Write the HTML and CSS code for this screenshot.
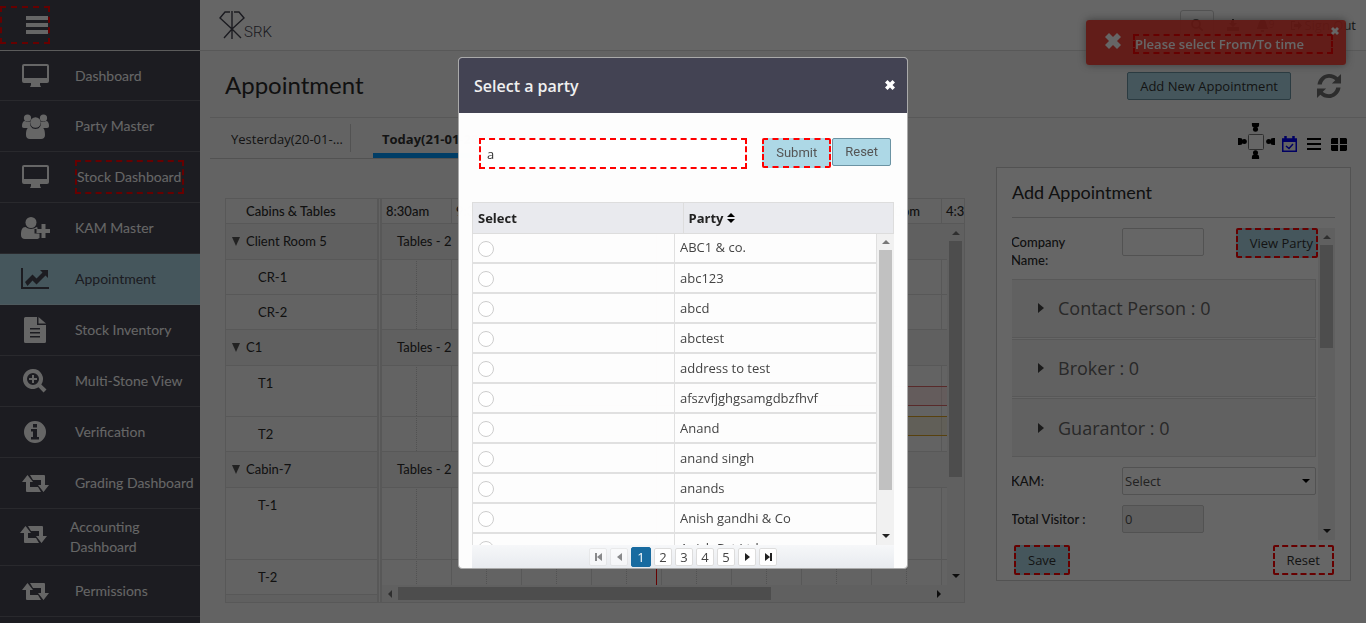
FILE: index.html
```html
<!DOCTYPE html>
<html lang="en">
<head>
<meta charset="utf-8">
<title>Appointment</title>
<link rel="stylesheet" href="styles.css">
</head>
<body>
<svg class="defs" width="0" height="0" aria-hidden="true">
  <symbol id="i-monitor" viewBox="0 0 27 24"><path fill-rule="evenodd" d="M2 0h23a2 2 0 0 1 2 2v15a2 2 0 0 1-2 2h-7v2l1 2H8l1-2v-2H2a2 2 0 0 1-2-2V2a2 2 0 0 1 2-2zm0 2v12h23V2z"/></symbol>
  <symbol id="i-users" viewBox="0 0 27 25"><circle cx="5.500" cy="4" r="3.600"/><circle cx="21.500" cy="4" r="3.600"/><path d="M0 12c0-3 1-5 3-5 2 1 3 1 5 .5C7.500 11 9 13 10 14H2c-1.500 0-2-1-2-2zM27 12c0-3-1-5-3-5-2 1-3 1-5 .5.500 3.500-1 5.500-2 6.500h8c1.500 0 2-1 2-2z"/><circle cx="13.500" cy="8.500" r="5.300"/><path d="M4 21c0-5 1-8 4.500-8 3 2.500 7 2.500 10 0C22 13 23 16 23 21c0 2.500-1.500 4-4 4H8c-2.500 0-4-1.500-4-4z"/></symbol>
  <symbol id="i-user-plus" viewBox="0 0 29 22"><circle cx="10" cy="5.500" r="5.500"/><path d="M0 18c0-5 1-8 4.500-8 3 2.500 8 2.500 11 0l1 .5V12h-3v4.500h5V21l-2 1H4c-2.500 0-4-1.500-4-4z"/><path d="M20.500 7h4v5h4.500v4h-4.500v5h-4v-5H15.500v-4h5z"/></symbol>
  <symbol id="i-chart" viewBox="0 0 28 22"><path d="M0 0h2v19h26v2H0z"/><path d="M4 14l7.500-7.500 4 4 6-6L19 2h8v8l-2.500-2.500-9 9-4-4L6.500 18z"/></symbol>
  <symbol id="i-file" viewBox="0 0 22 26"><path fill-rule="evenodd" d="M1.500 0H13v8h9v16.500a1.500 1.500 0 0 1-1.500 1.500h-19A1.500 1.500 0 0 1 0 24.500v-23A1.500 1.500 0 0 1 1.500 0zM6 11v1.500h10V11zm0 4v1.500h10V15zm0 4v1.500h10V19z"/><path d="M14.500 0L22 6.500h-7.500z"/></symbol>
  <symbol id="i-zoom" viewBox="0 0 24 24"><path fill-rule="evenodd" d="M10 0a10 10 0 0 1 8.300 15.500L23.500 20.500 20.500 23.500 15.500 18.300A10 10 0 1 1 10 0zm0 4a6 6 0 1 0 0 12 6 6 0 0 0 0-12z"/><path d="M9 6h2v3h3v2h-3v3H9v-3H6V9h3z"/></symbol>
  <symbol id="i-info" viewBox="0 0 22 22"><path fill-rule="evenodd" d="M11 0a11 11 0 1 1 0 22 11 11 0 0 1 0-22zM9 3v3.500h4V3zM7 8v2.500h2V16H7v2.500h8V16h-2V8z"/></symbol>
  <symbol id="i-retweet" viewBox="0 0 27 17"><path d="M5.500 0L11 7H8v5h8l3 5H5a1 1 0 0 1-1-1V7H0z"/><path d="M21.500 17L16 10h3V5h-8L8 0h14a1 1 0 0 1 1 1v9h4z"/></symbol>
  <symbol id="i-x" viewBox="0 0 12 12"><path d="M3 0l3 3 3-3 3 3-3 3 3 3-3 3-3-3-3 3-3-3 3-3-3-3z"/></symbol>
  <symbol id="i-refresh" viewBox="0 0 26 26"><path d="M1 11C2 4 8 0 13 0c4 0 7 1.500 9 3.500L25.500 0v10H16l3.500-3.500C18 5 15.500 4 13 4c-4 0-6.500 3-7.500 7z"/><path d="M25 14c-1 7-7 11-12 11-4 0-7-1.500-9-3.500L.5 25V15H10l-3.500 3.500C8 20 10.500 21 13 21c4 0 6.500-3 7.500-7z"/></symbol>
  <symbol id="i-person" viewBox="0 0 10 10"><circle cx="5" cy="3" r="2.800"/><path d="M1 10V8c0-2 1-3 2.500-3h3C8 5 9 6 9 8v2z"/></symbol>
</svg>

<div class="app">
  <nav class="sidebar" aria-label="Main">
    <div class="sidebar-head"><button class="menu-btn mark" aria-label="Menu"><svg width="22" height="18" viewBox="0 0 22 18"><path d="M0 0h22v4H0zM0 7h22v4H0zM0 14h22v4H0z"/></svg></button></div>
    <a href="#" class="nav-item"><svg width="27" height="24"><use href="#i-monitor"/></svg><span>Dashboard</span></a>
    <a href="#" class="nav-item"><svg width="27" height="25"><use href="#i-users"/></svg><span>Party Master</span></a>
    <a href="#" class="nav-item"><svg width="27" height="24"><use href="#i-monitor"/></svg><span class="nav-mark mark">Stock Dashboard</span></a>
    <a href="#" class="nav-item"><svg width="29" height="22"><use href="#i-user-plus"/></svg><span>KAM Master</span></a>
    <a href="#" class="nav-item active"><svg width="28" height="22"><use href="#i-chart"/></svg><span>Appointment</span></a>
    <a href="#" class="nav-item"><svg width="22" height="26"><use href="#i-file"/></svg><span>Stock Inventory</span></a>
    <a href="#" class="nav-item"><svg width="24" height="24"><use href="#i-zoom"/></svg><span>Multi-Stone View</span></a>
    <a href="#" class="nav-item"><svg width="22" height="22"><use href="#i-info"/></svg><span>Verification</span></a>
    <a href="#" class="nav-item"><svg width="27" height="17"><use href="#i-retweet"/></svg><span>Grading Dashboard</span></a>
    <a href="#" class="nav-item tall"><svg width="27" height="17"><use href="#i-retweet"/></svg><span>Accounting Dashboard</span></a>
    <a href="#" class="nav-item"><svg width="27" height="17"><use href="#i-retweet"/></svg><span>Permissions</span></a>
  </nav>

  <div class="main">
    <header class="topbar">
      <div class="logo">
        <svg width="26" height="28" viewBox="0 0 26 28" fill="none" stroke="#454552" stroke-width="1.400"><path d="M11 1H6L1 7l12 11 12-11-5-6h-5M13 0v28M13 18L5 27M13 18l9 9"/></svg>
        <span>SRK</span>
      </div>
      <div class="top-actions">
        <button class="search-btn" aria-label="Search"><svg width="12" height="12" viewBox="0 0 12 12" fill="none" stroke="#222" stroke-width="2"><circle cx="5" cy="5" r="4"/><path d="M8 8l4 4"/></svg></button>
        <svg width="12" height="12" viewBox="0 0 12 12"><path d="M4 2h1V0h2v4h3L6 8 2 4h2zM0 8h12v4H0z"/></svg>
        <span class="bell"><svg width="13" height="13" viewBox="0 0 13 13"><path d="M5 1h3c3 1 2 6 4 8v1H1V9c2-2 1-7 4-8zM5 11h3v2H5z"/></svg><sup>9</sup></span>
        <a href="#" class="signout"><svg width="11" height="11" viewBox="0 0 11 11"><path d="M0 1h4v1H1v7h3v1H0zM3 4h4V1l4 4.500L7 10V7H3z"/></svg>Sign Out</a>
      </div>
    </header>

    <div class="titlebar">
      <h1>Appointment</h1>
      <div class="title-actions">
        <button class="btn add-btn">Add New Appointment</button>
        <button class="icon-btn" aria-label="Refresh"><svg width="26" height="25" fill="#6e6e6e"><use href="#i-refresh"/></svg></button>
      </div>
    </div>

    <div class="columns">
      <section class="left">
        <div class="tabs">
          <button class="tab"><span>Yesterday(20-01-2020)</span></button>
          <button class="tab current"><span>Today(21-01-2020)</span></button>
        </div>
        <div class="scheduler">
          <div class="resources">
            <div class="cell head">Cabins &amp; Tables</div>
            <div class="cell group">Client Room 5</div>
            <div class="cell room">CR-1</div>
            <div class="cell room">CR-2</div>
            <div class="cell group">C1</div>
            <div class="cell room mid">T1</div>
            <div class="cell room">T2</div>
            <div class="cell group">Cabin-7</div>
            <div class="cell room high">T-1</div>
            <div class="cell room">T-2</div>
            <div class="filler"></div>
          </div>
          <div class="timeline">
            <div class="times"><span>8:30am</span><span>9:30am</span><span>10:30am</span><span>11:30am</span><span>12:30pm</span><span>1:30pm</span><span>2:30pm</span><span>3:30pm</span><span>4:30pm</span></div>
            <div class="time-area">
              <div class="lanes">
                <div class="cell stats"><span>Tables - 2</span></div>
                <div class="cell lane"></div>
                <div class="cell lane"></div>
                <div class="cell stats"><span>Tables - 2</span></div>
                <div class="cell lane mid"><div class="event red"></div></div>
                <div class="cell lane"><div class="event amber"></div></div>
                <div class="cell stats"><span>Tables - 2</span></div>
                <div class="cell lane high"></div>
                <div class="cell lane"></div>
                <div class="now"></div>
              </div>
              <div class="vscroll"><i class="arrow up"></i><div class="thumb"></div><i class="arrow down"></i></div>
            </div>
            <div class="hscroll"><i class="arrow prev"></i><div class="track"><div class="thumb"></div></div><i class="arrow next"></i></div>
          </div>
        </div>
      </section>

      <section class="right">
        <div class="views">
          <svg class="seats" width="37" height="37" viewBox="0 0 37 37"><rect x="10.500" y="11.500" width="15" height="15" rx="1" fill="#fff" stroke="#777"/><use href="#i-person" x="13" y="27" width="9" height="9"/><use href="#i-person" width="9" height="9" transform="translate(22 9) rotate(180)"/><use href="#i-person" width="9" height="9" transform="translate(9 14) rotate(90)"/><use href="#i-person" width="9" height="9" transform="translate(28 23) rotate(-90)"/></svg>
          <svg class="cal" width="15" height="16" viewBox="0 0 15 16" fill="none" stroke="#0000f5"><rect x=".75" y="3" width="13.500" height="12.250" stroke-width="1.500"/><path d="M0 4.500h15" stroke-width="3"/><path d="M3.500 0v4M11.500 0v4" stroke-width="2.500"/><path d="M4 10l3 2.500L11 8" stroke-width="1.500"/></svg>
          <svg width="14" height="12" viewBox="0 0 14 12"><path d="M0 0h14v2H0zM0 5h14v2H0zM0 10h14v2H0z"/></svg>
          <svg width="16" height="13" viewBox="0 0 16 13"><path d="M1 0h6v6H0V1zM9 0h6l1 1v5H9zM0 7h7v6H1l-1-1zM9 7h7v5l-1 1H9z"/></svg>
        </div>
        <div class="panel">
          <h2>Add Appointment</h2>
          <div class="panel-scroll">
            <div class="form">
              <div class="row company"><label for="company">Company Name:</label><input id="company" class="short" type="text"><button class="btn mark view-btn">View Party</button></div>
              <div class="accordion">
                <button class="acc"><i class="arrow next"></i>Contact Person : 0</button>
                <button class="acc"><i class="arrow next"></i>Broker : 0</button>
                <button class="acc"><i class="arrow next"></i>Guarantor : 0</button>
              </div>
              <div class="row"><label for="kam">KAM:</label><div class="select"><select id="kam"><option>Select</option></select><i class="arrow down"></i></div></div>
              <div class="row"><label for="visitors">Total Visitor :</label><input id="visitors" class="short" type="text" value="0" disabled></div>
            </div>
            <div class="vscroll"><i class="arrow up"></i><div class="thumb"></div><i class="arrow down"></i></div>
          </div>
          <div class="panel-foot"><button class="btn mark">Save</button><button class="btn mark plain">Reset</button></div>
        </div>
      </section>
    </div>
  </div>
</div>

<div class="toast" role="alert"><svg width="16" height="16"><use href="#i-x"/></svg><span class="toast-text mark">Please select From/To time</span><button class="toast-close" aria-label="Dismiss"><svg width="8" height="8"><use href="#i-x"/></svg></button></div>

<div class="backdrop">
  <div class="dialog" role="dialog" aria-labelledby="dlg-title">
    <div class="dialog-head"><h2 id="dlg-title">Select a party</h2><button aria-label="Close"><svg width="10" height="10"><use href="#i-x"/></svg></button></div>
    <div class="dialog-body">
      <div class="filter"><input class="mark" type="text" value="a" aria-label="Party name"><button class="btn mark">Submit</button><button class="btn">Reset</button></div>
      <table class="thead"><thead><tr><th>Select</th><th>Party <svg width="8" height="10" viewBox="0 0 8 10"><path d="M4 0l4 4H0zM4 10l4-4H0z"/></svg></th></tr></thead></table>
      <div class="tbody">
        <table>
          <tr><td><input type="radio" name="party" id="p1"></td><td><label for="p1">ABC1 &amp; co.</label></td></tr>
          <tr><td><input type="radio" name="party" id="p2"></td><td><label for="p2">abc123</label></td></tr>
          <tr><td><input type="radio" name="party" id="p3"></td><td><label for="p3">abcd</label></td></tr>
          <tr><td><input type="radio" name="party" id="p4"></td><td><label for="p4">abctest</label></td></tr>
          <tr><td><input type="radio" name="party" id="p5"></td><td><label for="p5">address to test</label></td></tr>
          <tr><td><input type="radio" name="party" id="p6"></td><td><label for="p6">afszvfjghgsamgdbzfhvf</label></td></tr>
          <tr><td><input type="radio" name="party" id="p7"></td><td><label for="p7">Anand</label></td></tr>
          <tr><td><input type="radio" name="party" id="p8"></td><td><label for="p8">anand singh</label></td></tr>
          <tr><td><input type="radio" name="party" id="p9"></td><td><label for="p9">anands</label></td></tr>
          <tr><td><input type="radio" name="party" id="p10"></td><td><label for="p10">Anish gandhi &amp; Co</label></td></tr>
          <tr><td><input type="radio" name="party" id="p11"></td><td><label for="p11">Anish Pvt Ltd</label></td></tr>
        </table>
        <div class="vscroll"><i class="arrow up"></i><div class="thumb"></div><i class="arrow down"></i></div>
      </div>
      <div class="pager">
        <button class="pg off" aria-label="First"><svg width="7" height="8" viewBox="0 0 7 8"><path d="M0 0h2v8H0zM7 0v8L2 4z"/></svg></button>
        <button class="pg off" aria-label="Previous"><svg width="5" height="8" viewBox="0 0 5 8"><path d="M5 0v8L0 4z"/></svg></button>
        <button class="pg on">1</button><button class="pg">2</button><button class="pg">3</button><button class="pg">4</button><button class="pg">5</button>
        <button class="pg" aria-label="Next"><svg width="5" height="8" viewBox="0 0 5 8"><path d="M0 0v8l5-4z"/></svg></button>
        <button class="pg" aria-label="Last"><svg width="7" height="8" viewBox="0 0 7 8"><path d="M5 0h2v8H5zM0 0v8l5-4z"/></svg></button>
      </div>
    </div>
  </div>
</div>
</body>
</html>
```
FILE: styles.css
```css
* { box-sizing: border-box; }
body { margin: 0; height: 100vh; overflow: hidden; font: 13px/20px Lato, sans-serif; color: #2b2b2b; background: #f8f8f8; }
h1, h2 { margin: 0; font-weight: 400; }
button, input, select { font: 13px/18px "Open Sans", sans-serif; color: #333; margin: 0; border-radius: 0; }
button { background: none; border: 0; padding: 0; }
svg { display: block; flex: none; }
.defs { position: absolute; }
.app { display: flex; height: 100%; }

.mark, .btn.mark { border: 2px dashed #f00; }
.btn { height: 28px; padding: 0 12px; background: #add8e6; border: 1px solid #6b93a3; border-radius: 2px; white-space: nowrap; }
.btn.mark { height: 30px; }
.btn.plain { background: #fff; }

/* Sidebar */
.sidebar { flex: none; width: 200px; background: #464653; overflow: hidden; }
.sidebar-head { height: 51px; padding-top: 6px; border-bottom: 1px solid #e4e4e4; }
.menu-btn { width: 50px; height: 38px; display: flex; align-items: center; justify-content: flex-end; }
.menu-btn svg { fill: #fff; }
.nav-item { height: 51px; padding-left: 19px; display: grid; grid-template-columns: 32px 1fr; column-gap: 24px; align-items: center; border-bottom: 1px solid #666671; color: #fff; fill: #fff; font-size: 14px; text-decoration: none; }
.nav-item svg { margin: 0 auto; }
.nav-item span { white-space: nowrap; }
.nav-item:nth-child(2) { height: 50px; }
.nav-item.active { background: #add8e6; color: #464653; fill: #464653; border-color: #c0dfe8; }
.nav-item.tall { height: 57px; padding-left: 17px; column-gap: 21px; }
.nav-item.tall svg { margin-bottom: 5px; }
.nav-item.tall span { width: 100px; white-space: normal; }
.nav-item .nav-mark { width: 109px; height: 34px; line-height: 30px; }

/* Header */
.main { flex: 1; min-width: 0; display: flex; flex-direction: column; }
.topbar { height: 51px; padding: 0 10px 0 19px; background: #fff; border-bottom: 1px solid #ddd; display: flex; justify-content: space-between; align-items: center; }
.logo { display: flex; align-items: flex-end; }
.logo span { margin-left: -1px; font: 15px/14px Roboto, sans-serif; font-weight: 300; color: #454552; }
.top-actions { display: flex; align-items: center; gap: 17px; font: 13px/20px "Open Sans", sans-serif; }
.search-btn { width: 34px; height: 30px; margin-right: -4px; border: 1px solid #ccc; border-radius: 3px; display: flex; align-items: center; justify-content: center; }
.bell { display: flex; }
.bell sup { font-size: 10px; line-height: 10px; }
.signout { display: flex; align-items: center; gap: 2px; color: #333; text-decoration: none; }
.titlebar { height: 67px; margin-left: 10px; padding: 4px 24px 0 15px; border-bottom: 1px solid #ddd; display: flex; justify-content: space-between; align-items: center; }
h1 { font-size: 24px; line-height: 32px; padding-bottom: 2px; }
.title-actions { display: flex; align-items: center; gap: 25px; }
.columns { flex: 1; margin: 0 15px 0 10px; display: flex; gap: 31px; }

/* Tabs */
.left { flex: 1; min-width: 0; display: flex; flex-direction: column; }
.tabs { width: 90%; height: 41px; border-bottom: 1px solid #ccc; display: flex; gap: 22px; align-items: center; }
.tab { width: 141px; height: 28px; padding: 1px 6px 0 21px; border-right: 1px solid #ccc; text-align: left; }
.tab span { display: block; overflow: hidden; text-overflow: ellipsis; white-space: nowrap; }
.tab.current { height: 40px; padding: 6px 9px 0; border-right: 0; border-bottom: 5px solid #0098ff; font-weight: 700; }
.tab.current span { overflow: visible; }

/* Scheduler */
.scheduler { margin: 39px 0 0 15px; display: flex; border: 1px solid #ddd; }
.cell { height: 35px; border-bottom: 1px solid #ddd; position: relative; }
.resources { flex: none; width: 156px; border-right: 5px double #ddd; }
.cell.head { height: 25px; padding-left: 20px; line-height: 25px; font-weight: 500; }
.cell.group { height: 36px; padding-left: 20px; line-height: 34px; background: #efefef; }
.cell.group::before { content: ""; position: absolute; left: 6px; top: 13px; border: solid transparent; border-width: 9px 4px 0; border-top-color: #555; }
.cell.room { padding-left: 32px; line-height: 34px; }
.cell.mid { height: 51px; }
.cell.high { height: 72px; }
.filler { height: 7px; background: #f0f0f0; }
.timeline { flex: 1; min-width: 0; display: flex; flex-direction: column; }
.times { height: 25px; border-bottom: 1px solid #ddd; display: flex; overflow: hidden; line-height: 25px; font-weight: 500; }
.times span { flex: none; width: 70px; padding-left: 4px; border-right: 1px solid #ddd; }
.time-area { flex: 1; display: flex; }
.lanes { flex: 1; min-width: 0; height: 361px; overflow: hidden; position: relative; }
.cell.stats { height: 36px; padding-left: 15px; line-height: 34px; background: #efefef; }
.lane { background: linear-gradient(to right, transparent 69px, #ddd 69px) 0 0 / 70px 100%, repeating-linear-gradient(to bottom, #f8f8f8 0 1px, transparent 1px 2px), linear-gradient(to right, transparent 34px, #ccc 34px 35px, transparent 35px) 0 0 / 70px 100%; }
.event { position: absolute; left: 150px; right: 0; height: 20px; }
.event.red { top: 20px; border: solid #dd6a6a; border-width: 1px 0; background: rgba(255, 190, 185, .3); }
.event.amber { top: -1px; border: solid #dca224; border-width: 1px 0; background: rgba(225, 205, 130, .25); }
.now { position: absolute; left: 274px; top: 0; width: 1px; height: 100%; background: #f00; }

/* Scrollbars and arrows */
.arrow { display: block; width: 0; height: 0; border: 4px solid transparent; }
.arrow.up { border-top-width: 0; border-bottom-color: #777; }
.arrow.down { border-bottom-width: 0; border-top-color: #222; }
.arrow.prev { border-left-width: 0; border-right-color: #777; }
.arrow.next { border-right-width: 0; border-left-color: #222; }
.vscroll { flex: none; width: 17px; padding: 7px 0; display: flex; flex-direction: column; align-items: center; background: #f1f1f1; }
.vscroll .arrow.down { margin-top: auto; }
.vscroll .thumb { width: 13px; height: 103px; margin-top: 6px; background: #c1c1c1; }
.time-area .thumb { height: 236px; }
.hscroll { height: 17px; padding: 0 23px 0 6px; display: flex; align-items: center; background: #f1f1f1; }
.hscroll .track { flex: 1; padding: 0 6px; }
.hscroll .thumb { width: 70%; height: 13px; background: #c1c1c1; }

/* Appointment form */
.right { flex: none; width: 355px; }
.views { height: 49px; padding: 5px 4px 0 0; display: flex; justify-content: flex-end; align-items: flex-start; gap: 10px; }
.views svg { margin-top: 15px; }
.views .seats { margin: 0; }
.views .cal { margin: 13px 0 0 -3px; }
.panel { height: 414px; padding: 12px 15px 5px; background: #fff; border: 1px solid #ccc; display: flex; flex-direction: column; }
.panel h2 { font-size: 18px; line-height: 24px; padding-bottom: 13px; border-bottom: 1px solid #ccc; margin-bottom: 10px; }
.panel-scroll { height: 312px; display: flex; justify-content: space-between; }
.form { flex: 1; overflow: hidden; }
.row { display: grid; grid-template-columns: 110px 1fr auto; align-items: center; margin-bottom: 10px; }
.row label { margin-left: -1px; line-height: 18px; font-weight: 500; }
.company { height: 42px; margin-bottom: 9px; align-items: start; }
.company label { padding: 5px 40px 0 0; }
.short, select { height: 28px; border: 1px solid #ccc; border-radius: 2px; padding: 0 2px; background: #fff; color: #555; }
.short { width: 82px; }
.short:disabled { background: #eee; }
.select { width: 194px; position: relative; }
.select select { display: block; width: 100%; appearance: none; }
.select .arrow { position: absolute; right: 6px; top: 12px; border-top-color: #000; }
.view-btn { padding-right: 3px; }
.accordion { height: 178px; margin: 0 2px 10px 0; display: grid; gap: 1px; }
.acc { padding-left: 26px; display: flex; align-items: center; gap: 14px; border: 1px solid #ddd; border-left: 0; background: #f3f3f3; font-size: 18px; color: #666; }
.acc .arrow { border-width: 5px 0 5px 6px; border-left-color: #444; }
.panel-foot { display: flex; justify-content: space-between; padding: 5px 1px 0 2px; }

/* Toast */
.toast { position: fixed; top: 20px; right: 20px; width: 260px; height: 45px; padding: 0 13px 3px 19px; display: flex; align-items: center; gap: 12px; border-radius: 3px; background: rgba(245, 65, 55, .95); box-shadow: 0 0 8px #999; color: #fff; fill: #fff; font: 13px/16px "Open Sans", sans-serif; font-weight: 600; }
.toast-text { width: 200px; height: 20px; margin-top: 6px; }
.toast-close { position: absolute; right: 7px; top: 7px; }

/* Dialog */
.backdrop { position: fixed; inset: 0; padding-top: 3px; display: flex; align-items: center; justify-content: center; background: rgba(0, 0, 0, .6); font-family: "Open Sans", sans-serif; }
.dialog { width: 450px; background: rgba(255, 255, 255, .99); border: 1px solid #aaa; border-radius: 4px; overflow: hidden; font-size: 13px; }
.dialog-head { height: 55px; padding: 0 12px 2px 15px; display: flex; align-items: center; justify-content: space-between; background: #434353; color: #f0f0f0; fill: #fff; }
.dialog-head h2 { font-size: 16px; line-height: 20px; padding-top: 3px; font-weight: 600; }
.dialog-body { padding: 25px 13px 0; }
.filter { display: flex; align-items: flex-start; padding: 0 3px 0 7px; margin-bottom: 33px; }
.filter input { flex: 1; min-width: 0; height: 31px; padding: 0 6px; margin-right: 15px; background: #fff; }
.filter .btn { padding: 0 12px; color: #555; margin-right: 1px; font: 13px/18px Roboto, sans-serif; }
.filter .btn:last-child { margin: 0; }
table { border-collapse: collapse; table-layout: fixed; width: 100%; }
th { height: 31px; padding: 0 5px; text-align: left; background: #e9eaee; border: 1px solid #ddd; color: #222; }
th svg { display: inline-block; }
.tbody { height: 311px; display: flex; overflow: hidden; color: #444; }
.tbody table { align-self: flex-start; margin-top: -2px; }
td { height: 30px; padding: 0 5px; border: 1px solid #e0e0e0; border-bottom-width: 2px; }
td input { appearance: none; display: block; width: 16px; height: 16px; margin-top: 3px; border: 1px solid #ccc; border-radius: 50%; background: #fff; }
.tbody .vscroll { padding-top: 6px; }
.tbody .thumb { height: 240px; }
.pager { height: 23px; display: flex; justify-content: center; align-items: center; gap: 3px; background: linear-gradient(#f6f7f9, #e8ebef); }
.pg { width: 18px; height: 18px; display: flex; align-items: center; justify-content: center; border: 1px solid #ddd; border-radius: 2px; background: #fff; color: #444; fill: #222; }
.pg.on { background: #186ba0; border-color: #186ba0; color: #fff; width: 20px; height: 20px; }
.pg.off { opacity: .5; }
```
